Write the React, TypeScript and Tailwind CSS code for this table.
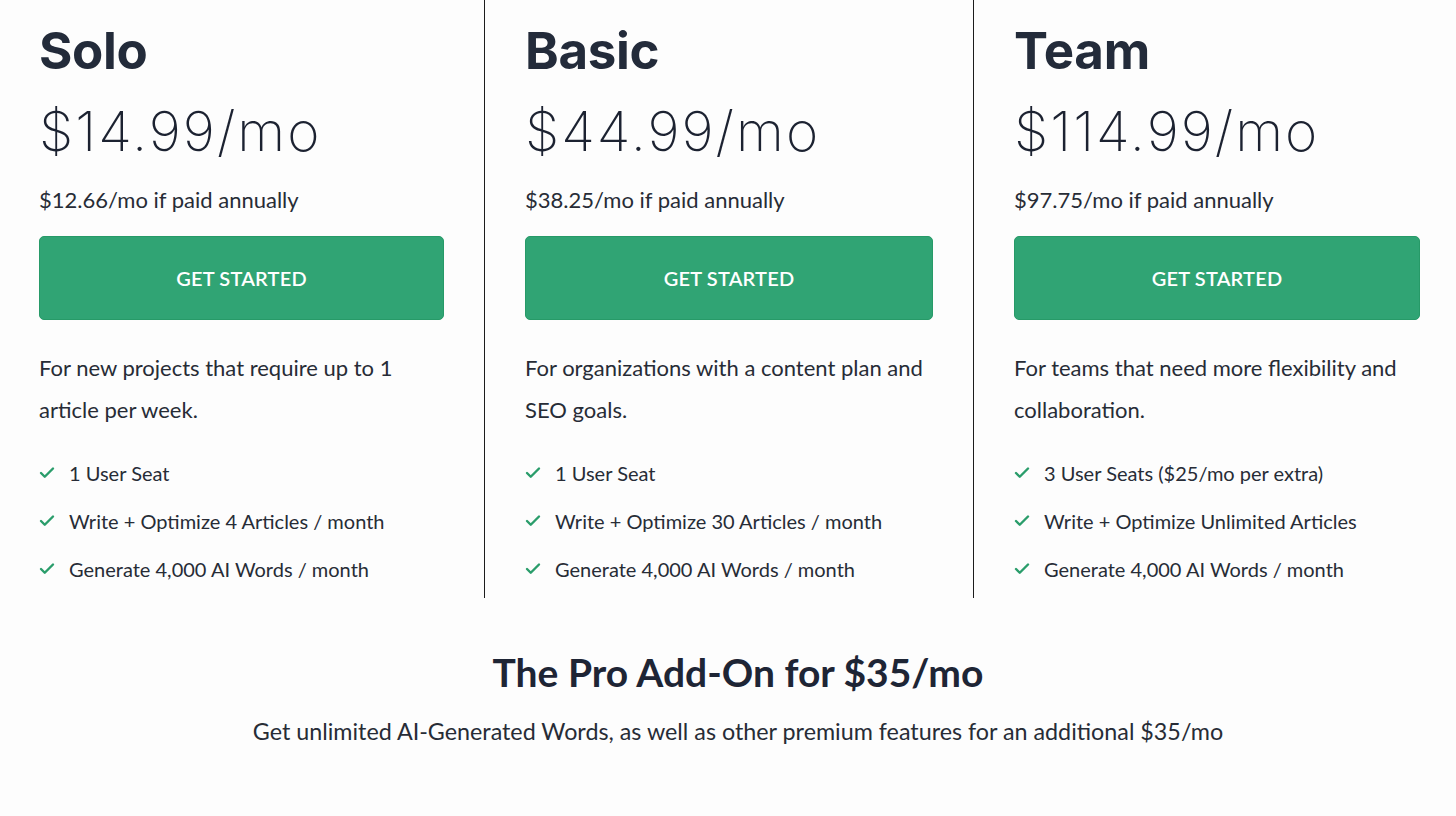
import { Check } from "lucide-react";

type Plan = {
  name: string;
  price: string;
  annual: string;
  description: string;
  features: string[];
  pad: string;
};

const plans: Plan[] = [
  {
    name: "Solo",
    price: "$14.99/mo",
    annual: "$12.66/mo if paid annually",
    description: "For new projects that require up to 1 article per week.",
    features: [
      "1 User Seat",
      "Write + Optimize 4 Articles / month",
      "Generate 4,000 AI Words / month",
    ],
    pad: "pl-[39px] pr-[40px]",
  },
  {
    name: "Basic",
    price: "$44.99/mo",
    annual: "$38.25/mo if paid annually",
    description: "For organizations with a content plan and SEO goals.",
    features: [
      "1 User Seat",
      "Write + Optimize 30 Articles / month",
      "Generate 4,000 AI Words / month",
    ],
    pad: "pl-10 pr-10 border-l border-[#1c1c1c]",
  },
  {
    name: "Team",
    price: "$114.99/mo",
    annual: "$97.75/mo if paid annually",
    description: "For teams that need more flexibility and collaboration.",
    features: [
      "3 User Seats ($25/mo per extra)",
      "Write + Optimize Unlimited Articles",
      "Generate 4,000 AI Words / month",
    ],
    pad: "pl-10 pr-[36px] border-l border-[#1c1c1c]",
  },
];

const PlanColumn = ({ plan }: { plan: Plan }) => (
  <div className={`pt-[25px] pb-[5px] ${plan.pad}`}>
    {/* Name + price */}
    <h2 className="font-['Inter',sans-serif] text-[51px] leading-none font-bold text-[#232b3a] tracking-[-0.3px]">
      {plan.name}
    </h2>
    <div className="mt-[28px] font-['Inter',sans-serif] text-[55px] leading-none font-extralight text-[#1c2231] tracking-[2px]">
      {plan.price}
    </div>
    <p className="mt-[27px] text-[22px] leading-[28px] text-[#272c36]">
      {plan.annual}
    </p>

    <button className="mt-[22px] w-full h-[84px] rounded-[5px] bg-[#30a474] border border-[#279a68] text-white text-[20px] font-semibold tracking-[0.2px]">
      GET STARTED
    </button>

    <p className="mt-[27px] text-[22px] leading-[42px] text-[#272c36]">
      {plan.description}
    </p>

    {/* Features */}
    <ul className="mt-[18px]">
      {plan.features.map((feature) => (
        <li
          key={feature}
          className="flex items-center text-[20px] leading-[48px] text-[#272c36]"
        >
          <Check className="w-[18px] h-[18px] -ml-px mr-[13px] text-[#2a9d6b]" strokeWidth={3.2} />
          {feature}
        </li>
      ))}
    </ul>
  </div>
);

const App = () => {
  return (
    <div className="w-[1456px] h-[816px] bg-[#fdfdfd] font-['Lato',sans-serif] overflow-hidden">
      {/* Plans */}
      <div className="grid grid-cols-[484px_489px_1fr]">
        {plans.map((plan) => (
          <PlanColumn key={plan.name} plan={plan} />
        ))}
      </div>

      {/* Pro add-on */}
      <div className="mt-[52px] pl-[20px] text-center">
        <h3 className="text-[39px] leading-[44px] font-bold text-[#1e2535]">
          The Pro Add-On for $35/mo
        </h3>
        <p className="mt-[22px] text-[23.3px] leading-[30px] text-[#272c36]">
          Get unlimited AI-Generated Words, as well as other premium features for an additional $35/mo
        </p>
      </div>
    </div>
  );
};

export default App;
